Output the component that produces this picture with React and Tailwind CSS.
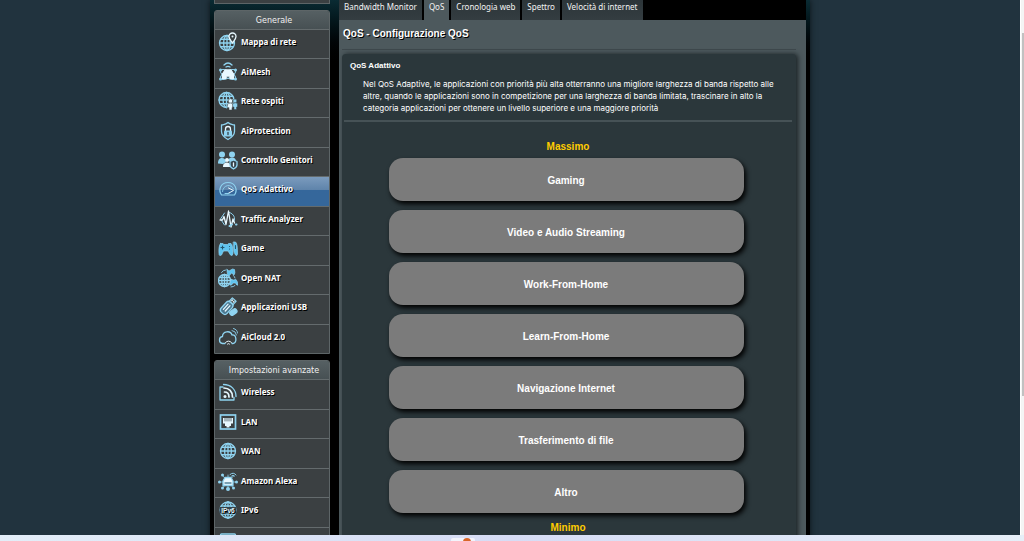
const C = "#8fd3f0";
const W = "#e8f8ff";

function Svg({ children }) {
  return (
    <svg viewBox="0 0 40 40" className="h-5 w-5 shrink-0" fill="none" stroke={C} strokeWidth="2.6" strokeLinecap="round" strokeLinejoin="round" aria-hidden="true">
      {children}
    </svg>
  );
}

const Globe = ({ cx = 20, cy = 20, r = 15 }) => (
  <g>
    <circle cx={cx} cy={cy} r={r} />
    <ellipse cx={cx} cy={cy} rx={r * 0.45} ry={r} />
    <path d={`M${cx} ${cy - r}V${cy + r}M${cx - r} ${cy}H${cx + r}M${cx - r * 0.85} ${cy - r * 0.5}H${cx + r * 0.85}M${cx - r * 0.85} ${cy + r * 0.5}H${cx + r * 0.85}`} />
  </g>
);

const Pad = ({ children, fill = "#5fc3ee" }) => (
  <g fill={fill} stroke={C} strokeWidth="1.4">{children}</g>
);

const icons = {
  map: (
    <Svg>
      <Globe cx={18} cy={22} r={15} />
      <path d="M29 22c-4-6-7-9-7-13a7 7 0 0 1 14 0c0 4-3 7-7 13z" fill="#3b4244" stroke={W} />
      <circle cx="29" cy="9" r="2" fill={W} stroke="none" />
    </Svg>
  ),
  mesh: (
    <Svg>
      <path d="M12 6c5-5 11-5 16 0M16 10c3-2 5-2 8 0" />
      <ellipse cx="20" cy="25" rx="17" ry="7" transform="rotate(28 20 25)" strokeWidth="1.8" />
      <ellipse cx="20" cy="25" rx="17" ry="7" transform="rotate(-28 20 25)" strokeWidth="1.8" />
      <path d="M9 24l5-8h12l5 8v9h-7v-5h-8v5H9z" fill={W} stroke={W} />
      <g fill={C} stroke="none"><circle cx="5" cy="16" r="3" /><circle cx="35" cy="16" r="3" /><circle cx="5" cy="34" r="3" /><circle cx="35" cy="34" r="3" /></g>
    </Svg>
  ),
  guest: (
    <Svg>
      <Globe cx={17} cy={18} r={15} />
      <g fill={W} stroke="#3b4244" strokeWidth="1">
        <circle cx="25" cy="20" r="4.5" /><path d="M19 26q6-4 11 0v7h-2v5h-6v-5h-3z" />
        <circle cx="34" cy="20" r="4" fill={C} /><path d="M30 25q5-3 9 0v7h-2v5h-5v-5h-2z" fill={C} />
      </g>
    </Svg>
  ),
  shield: (
    <Svg>
      <path d="M20 3c4 4 8 4 13 5v13c0 8-6 12-13 16C13 33 7 29 7 21V8c5-1 9-1 13-5z" />
      <path d="M15 20v-4a5 5 0 0 1 10 0v4" stroke={W} />
      <rect x="12" y="19" width="16" height="12" rx="2" fill={C} stroke="none" />
      <path d="M20 23v4" stroke="#34434b" />
    </Svg>
  ),
  family: (
    <Svg>
      <g fill={C} stroke="none">
        <circle cx="8" cy="9" r="6" /><path d="M0 27c0-9 4-11 8-11s8 3 8 8l-6 4z" />
        <circle cx="28" cy="9" r="6" /><path d="M20 22c1-5 4-7 8-7 5 0 8 3 8 8z" />
        <circle cx="18" cy="20" r="4" fill={W} /><path d="M10 34c0-7 4-9 8-9s7 3 7 9z" fill={W} />
      </g>
      <path d="M31 20l7 3v7c0 4-3 6-7 8-4-2-7-4-7-8v-7z" fill="#34434b" />
      <path d="M31 26v6" stroke={W} />
    </Svg>
  ),
  gauge: (
    <Svg>
      <path d="M7 32C0 22 5 7 20 7s20 15 13 25z" strokeWidth="2.4" />
      <path d="M9 25c1-14 18-16 22-5" strokeWidth="1.8" />
      <path d="M20 29l11-6-10-5" stroke={W} strokeWidth="2" />
      <path d="M14 29h8" strokeWidth="2" />
    </Svg>
  ),
  traffic: (
    <Svg>
      <path d="M13 8l-8 12 8 12M23 7c9 3 12 11 9 18" strokeWidth="2" />
      <path d="M4 22h5l3-7 4 16 5-27 5 32 4-16 3 8" stroke={W} />
      <path d="M23 34l5-3M36 31h1" stroke={C} strokeWidth="4" />
    </Svg>
  ),
  game: (
    <Svg>
      <Pad>
        <path d="M31 8h4q4 2 4 24-1 5-4 2l-3-6z" />
        <path d="M5 11h5l2 2h7l2-2h5q4 3 4 20-1 6-5 3l-5-8H11l-4 8q-5 3-5-3Q1 16 5 11z" />
      </Pad>
      <path d="M6 19h6M9 16v6M23 17h.1M23 22h.1M35 15v6" stroke="#24566e" strokeWidth="2.2" />
    </Svg>
  ),
  nat: (
    <Svg>
      <Globe cx={13} cy={25} r={12} />
      <path d="M7 9q3-5 8-5M34 20q-1-3-3-5M26 38q5 0 8-3" strokeWidth="1.8" />
      <Pad>
        <path d="M18 3l4 3 7-4 4 1q2 8-1 11l-5-4-5 6q-4 0-4-13z" />
        <path d="M27 23l4 1 5-1q3 3 4 11-2 2-5-4h-5q-3 6-6 4 0-8 3-11z" />
      </Pad>
    </Svg>
  ),
  usb: (
    <Svg>
      <g transform="rotate(42 19 20)">
        <rect x="14" y="0" width="10" height="9" />
        <path d="M17 3v2M21 3v2" stroke={W} />
        <rect x="11" y="9" width="16" height="27" rx="6" fill="#4c7890" />
        <path d="M16 15v14M21 15v14" stroke={W} />
      </g>
      <rect x="23" y="26" width="15" height="9" rx="4" transform="rotate(-35 30 30)" fill={C} />
    </Svg>
  ),
  cloud: (
    <Svg>
      <path d="M14 33H9c-8-1-8-13 0-14 0-11 16-13 19-3 9-1 11 16 2 17h-2" />
      <path d="M15 31q6-6 12 0M19 34q2-2 4 0" stroke={W} strokeWidth="2" />
      <path d="M28 7q8 1 9 9M31 3q8 2 8 9" strokeWidth="1.8" />
    </Svg>
  ),
  wireless: (
    <Svg>
      <path d="M10 10H4v26h28v-5" />
      <path d="M11 5c15 0 25 10 25 24" strokeWidth="2.6" />
      <path d="M12 12c10 0 17 7 17 18M13 20c6 0 9 4 9 10" stroke={W} strokeWidth="3.4" />
      <circle cx="14" cy="29" r="3" fill={W} stroke="none" />
    </Svg>
  ),
  lan: (
    <Svg>
      <rect x="5" y="6" width="30" height="28" strokeWidth="3.4" strokeLinejoin="miter" />
      <path d="M10 12h20v11h-4v5h-3v3h-6v-3h-3v-5h-4z" fill={W} stroke="none" />
      <path d="M14 12v6M18 12v6M22 12v6M26 12v6" stroke="#34434b" strokeWidth="1.5" />
    </Svg>
  ),
  wan: <Svg><Globe r={15} /></Svg>,
  alexa: (
    <Svg>
      <path d="M4 22h32M9 9l22 25M31 10L9 34M20 8v28" strokeWidth="1.6" />
      <path d="M10 20l4-7h12l4 7v9H10z" fill={W} stroke={C} />
      <path d="M14 24h12" stroke="#56849a" />
      <g fill={C} stroke="none"><circle cx="3" cy="22" r="3" /><circle cx="37" cy="22" r="3" /><circle cx="9" cy="8" r="3" /><circle cx="9" cy="34" r="3" /><circle cx="31" cy="34" r="3" /><circle cx="20" cy="36" r="4" /></g>
      <path d="M24 7q7-6 12 1M27 10q3-3 6 0" strokeWidth="2" />
    </Svg>
  ),
  ipv6: (
    <Svg>
      <Globe r={16} />
      <rect x="3" y="14" width="34" height="13" fill="#34434b" stroke="none" />
      <text x="20" y="25" textAnchor="middle" fill={W} stroke="none" fontSize="13" fontWeight="700" fontFamily="Liberation Sans, sans-serif">IPv6</text>
    </Svg>
  ),
  vpn: (
    <Svg>
      <rect x="5" y="8" width="30" height="24" rx="2" />
      <path d="M10 15h20" />
    </Svg>
  ),
};

const general = [
  ["map", "Mappa di rete"],
  ["mesh", "AiMesh"],
  ["guest", "Rete ospiti"],
  ["shield", "AiProtection"],
  ["family", "Controllo Genitori"],
  ["gauge", "QoS Adattivo"],
  ["traffic", "Traffic Analyzer"],
  ["game", "Game"],
  ["nat", "Open NAT"],
  ["usb", "Applicazioni USB"],
  ["cloud", "AiCloud 2.0"],
];

const advanced = [
  ["wireless", "Wireless"],
  ["lan", "LAN"],
  ["wan", "WAN"],
  ["alexa", "Amazon Alexa"],
  ["ipv6", "IPv6"],
  ["vpn", ""],
];

const tabs = ["Bandwidth Monitor", "QoS", "Cronologia web", "Spettro", "Velocità di internet"];

const categories = [
  "Gaming",
  "Video e Audio Streaming",
  "Work-From-Home",
  "Learn-From-Home",
  "Navigazione Internet",
  "Trasferimento di file",
  "Altro",
];

function Menu({ title, items, active, size }) {
  return (
    <nav aria-label={title} className="rounded-t-[3px] border border-[#5d6567] bg-[#3b4042]">
      <h2 className="h-[18px] rounded-t-[2px] bg-linear-to-b from-[#566063] to-[#475053] pt-[1px] pl-1 text-center text-[8px] leading-[18px] text-[#f0f0f0]">
        {title}
      </h2>
      <ul className={"grid auto-rows-fr " + size}>
        {items.map(([icon, label]) => (
          <li key={icon} className="border-t border-[#646b6d]">
            <a
              href="#"
              aria-label={label || icon}
              aria-current={label === active ? "page" : undefined}
              className={
                "flex h-full items-center gap-[3px] pb-1 pl-[3px] font-['Noto_Sans',sans-serif] text-[8px] font-bold whitespace-nowrap text-white text-shadow-[1px_1px_0_#000] " +
                (label === active ? "bg-linear-to-b from-[#7b9bbd] from-0% via-[#5f84ab] via-44% to-[#35679b] to-45%" : "")
              }
            >
              {icons[icon]}
              <span>{label}</span>
            </a>
          </li>
        ))}
      </ul>
    </nav>
  );
}

export default function App() {
  return (
    <div className="flex h-screen flex-col overflow-hidden bg-[#21333e] font-['DejaVu_Sans',sans-serif] text-white">
      <div className="flex min-h-0 flex-1">
        <div className="min-w-0 flex-1 overflow-hidden">
          <div className="mx-auto flex w-[600px] items-start bg-black bg-linear-to-b from-[#0a2b33] to-black to-[70px] pr-1 pl-1 shadow-[0_0_6px_#0b1418]">
            <aside className="flex w-[116px] shrink-0 flex-col gap-[6px]">
              <div className="h-1 border-x border-b border-[#5d6567] bg-[#3b4042]" />
              <Menu title="Generale" items={general} active="QoS Adattivo" size="h-[324px]" />
              <Menu title="Impostazioni avanzate" items={advanced} size="h-[177px]" />
            </aside>

            <main className="ml-[9px] min-w-0 flex-1">
              <div className="flex h-5 gap-[2px] bg-black">
                {tabs.map((t) => (
                  <button
                    key={t}
                    type="button"
                    className={
                      "h-5 px-[5px] pb-[6px] font-['Noto_Sans',sans-serif] text-[8px] leading-[14px] whitespace-nowrap text-[#f2f2f2] " +
                      (t === "QoS" ? "bg-[#4d595d]" : "bg-linear-to-b from-[#2c3539] to-[#343d41]")
                    }
                  >
                    {t}
                  </button>
                ))}
              </div>
              <section className="bg-[#4d595d] pr-[10px] pb-4 pl-[3px] font-['Liberation_Sans',Arial,sans-serif]">
                <h1 className="h-[30px] border-b border-[#3f494d] pl-[1px] text-[10px] leading-[27px] font-bold text-shadow-[1px_1px_0_#000]">
                  QoS - Configurazione QoS
                </h1>
                <div className="mt-1 rounded-[4px] bg-[#2b373b] pt-1 pr-1 pb-10 pl-[2px] shadow-[2px_0_5px_#1a2225]">
                  <h2 className="pl-[6px] text-[8px] leading-[15px] font-bold">QoS Adattivo</h2>
                  <p className="mt-[5px] mr-2 mb-[6px] ml-[19px] font-[Inter,sans-serif] text-[8px] leading-[12px]">
                    Nel QoS Adaptive, le applicazioni con priorità più alta otterranno una migliore larghezza di banda rispetto alle altre, quando le applicazioni sono in competizione per una larghezza di banda limitata, trascinare in alto la categoria applicazioni per ottenere un livello superiore e una maggiore priorità
                  </p>
                  <hr className="border-t-2 border-[#465256]" />
                  <p className="mt-[18px] text-center text-[10px] leading-[14px] font-bold text-[#ffcc00]">Massimo</p>
                  <ul className="mx-auto mt-1 flex w-[359px] flex-col gap-[9px] pr-1">
                    {categories.map((c) => (
                      <li
                        key={c}
                        draggable="true"
                        className="flex h-[43px] cursor-move items-center justify-center rounded-[14px] bg-[#7b7b7b] pt-[2px] text-[10px] font-bold shadow-[2px_3px_5px_#000]"
                      >
                        {c}
                      </li>
                    ))}
                  </ul>
                  <p className="mt-2 text-center text-[10px] leading-[14px] font-bold text-[#ffcc00]">Minimo</p>
                </div>
              </section>
            </main>
          </div>
        </div>
        <div className="flex w-1 flex-col border-l border-white bg-[#f4f4f4] pt-[33px] pl-[1px]">
          <div className="h-[363px] bg-[#c1c1c1]" />
        </div>
      </div>
      <footer className="flex h-[6px] shrink-0 items-end overflow-hidden bg-linear-to-r from-[#e3eef8] via-[#d6dcf5] to-[#e6eff8] pl-[44%]">
        <div className="flex h-[3px] w-6 justify-center rounded-t-[2px] bg-[#f2f4fc] pl-2">
          <svg viewBox="0 0 8 3" className="h-[3px] w-2" aria-hidden="true">
            <circle cx="4" cy="4" r="4" fill="#d9662a" />
          </svg>
        </div>
      </footer>
    </div>
  );
}
